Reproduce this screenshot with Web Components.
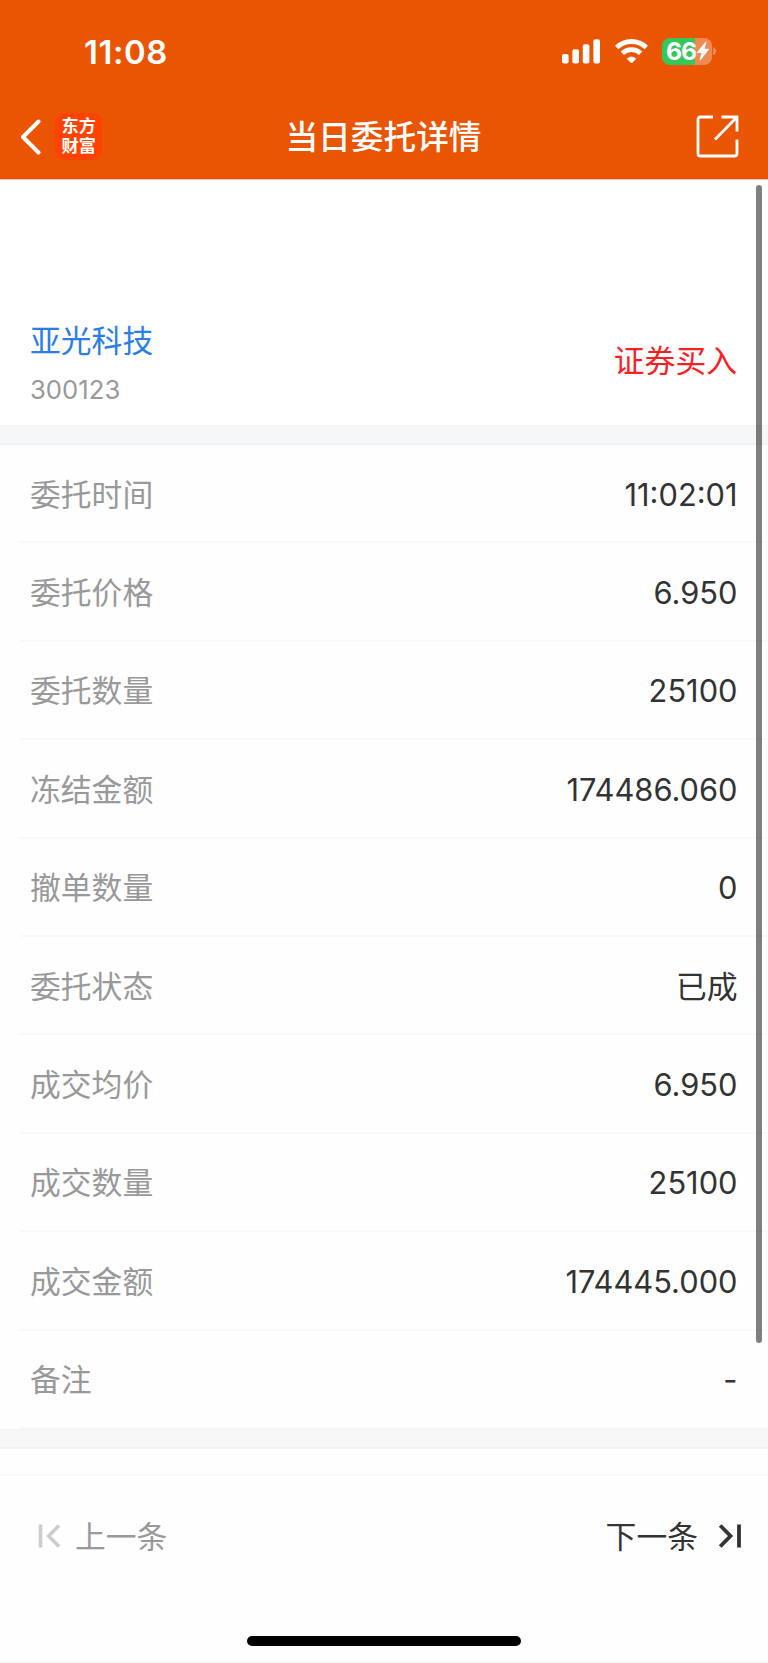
<!DOCTYPE html>
<html lang="zh-CN">
<head>
<meta charset="UTF-8">
<meta name="viewport" content="width=device-width, initial-scale=1">
<title>当日委托详情</title>
<style>
    :root {
        --brand: #ea5504;
        --text: #333;
        --muted: #999;
        --line: #f8f8f9;
        --gap: #f6f7f9;
    }

    body {
        margin: 0;
        background: #fefefe;
        color: var(--text);
        font-family: Inter, "Noto Sans CJK SC", sans-serif;
        font-size: 30.8px;
    }
</style>
</head>
<body>
<order-page></order-page>

<script>
/** Clock, signal, wifi and battery */
class StatusBar extends HTMLElement {
    constructor() {
        super();
        this.attachShadow({ mode: 'open' });
    }

    connectedCallback() {
        this.shadowRoot.innerHTML = `
            <style>
                :host {
                    display: flex;
                    justify-content: space-between;
                    align-items: center;
                    height: 102px;
                    padding: 0 51px 0 84px;
                    box-sizing: border-box;
                    color: #fff;
                }
                .time {
                    padding-top: 1px;
                    font-size: 32.8px;
                    font-weight: 600;
                    line-height: 40px;
                    letter-spacing: 0.6px;
                }
                .icons {
                    display: flex;
                    align-items: center;
                }
                svg { display: block; }
                .wifi { margin: 0 14px 0 14px; }
                .battery {
                    display: flex;
                    align-items: center;
                    gap: 1px;
                }
                .cell {
                    display: flex;
                    align-items: center;
                    width: 50px;
                    height: 27px;
                    border-radius: 8px;
                    background: linear-gradient(90deg, #34c759 33px, #f18a52 33px);
                }
                .level {
                    width: 30px;
                    margin-left: 4px;
                    font-size: 24.8px;
                    font-weight: 700;
                    line-height: 27px;
                    letter-spacing: -1.2px;
                }
            </style>
            <span class="time">${this.getAttribute('time')}</span>
            <div class="icons">
                <svg width="39" height="27" viewBox="0 0 39 27" fill="#fff">
                    <rect x="0" y="16" width="6.6" height="9.5" rx="2"/>
                    <rect x="10.4" y="11.3" width="6.6" height="14.2" rx="2"/>
                    <rect x="20.8" y="6.3" width="6.6" height="19.2" rx="2"/>
                    <rect x="31.4" y="1.2" width="6.6" height="24.3" rx="2"/>
                </svg>
                <svg class="wifi" width="33" height="27" viewBox="0 0 33 27" fill="none" stroke="#fff" stroke-width="4.8">
                    <path d="M1.7 9.5a21.2 21.2 0 0 1 29.6 0"/>
                    <path d="M7.3 15.3a13.2 13.2 0 0 1 18.4 0"/>
                    <path d="M16.5 25l-4.2-4.2a6 6 0 0 1 8.4 0z" fill="#fff" stroke-width="1"/>
                </svg>
                <div class="battery">
                    <div class="cell">
                        <span class="level">${this.getAttribute('battery')}</span>
                        <svg width="14" height="20" viewBox="0 0 14 20" fill="#fff">
                            <path d="M9.7.7 1 11.2q-.5.9.5.9h4L3.7 18.6q0 1 .9.4L13 8.6q.5-.9-.5-.9h-4L10.5 1.1q0-.8-.8-.4z"/>
                        </svg>
                    </div>
                    <svg width="4" height="10" viewBox="0 0 4 10" fill="#f18a52">
                        <path d="M0 1q3 1 3 4t-3 4z"/>
                    </svg>
                </div>
            </div>
        `;
    }
}

/** Title bar with back arrow, brand badge and share button */
class NavBar extends HTMLElement {
    constructor() {
        super();
        this.attachShadow({ mode: 'open' });
    }

    connectedCallback() {
        this.shadowRoot.innerHTML = `
            <style>
                :host {
                    display: grid;
                    grid-template-columns: 1fr auto 1fr;
                    align-items: center;
                    height: 77px;
                    padding: 0 29px 8px 20px;
                    box-sizing: border-box;
                    color: #fff;
                }
                svg { display: block; }
                .left {
                    display: flex;
                    align-items: center;
                    gap: 13px;
                }
                .logo {
                    width: 46.5px;
                    height: 46.5px;
                    padding: 3px 0 0 1px;
                    box-sizing: border-box;
                    border-radius: 9px;
                    background: #ff4200;
                    font: 700 17.2px/20px "Liberation Sans", "Noto Sans CJK SC", sans-serif;
                    text-align: center;
                }
                .logo div { height: 20px; }
                .title {
                    font-size: 32.7px;
                    font-weight: 500;
                    line-height: 44px;
                    margin-left: 8px;
                    padding-top: 1px;
                }
                .share { justify-self: end; }
            </style>
            <div class="left">
                <svg width="22" height="36" viewBox="0 0 22 36" fill="none" stroke="#fff" stroke-width="4" stroke-linecap="round" stroke-linejoin="round">
                    <path d="M18.5 2.5 3 18l15.5 15.5"/>
                </svg>
                <div class="logo"><div>东方</div><div>财富</div></div>
            </div>
            <span class="title"><slot></slot></span>
            <svg class="share" width="43" height="43" viewBox="0 0 43 43" fill="none" stroke="#fff" stroke-width="2.8">
                <path d="M17 2H4.5Q2 2 2 4.5V38.5Q2 41 4.5 41H38.5Q41 41 41 38.5V24.5"/>
                <path d="M25.5 2H41V16.5M40.5 2.5 19 24.5"/>
            </svg>
        `;
    }
}

/** Security name and code on the left, trade side on the right */
class StockHeader extends HTMLElement {
    constructor() {
        super();
        this.attachShadow({ mode: 'open' });
    }

    connectedCallback() {
        this.shadowRoot.innerHTML = `
            <style>
                :host {
                    display: flex;
                    justify-content: space-between;
                    align-items: center;
                    height: 245px;
                    padding: 121px 31px 0 30px;
                    box-sizing: border-box;
                    background: #fff;
                }
                .name {
                    color: #2b7de9;
                    line-height: 44px;
                }
                .code {
                    margin-top: 9px;
                    color: var(--muted);
                    font-size: 25.7px;
                    line-height: 36px;
                }
                .side {
                    color: #f9201f;
                    line-height: 44px;
                    margin-bottom: 5px;
                }
            </style>
            <div>
                <div class="name">${this.getAttribute('name')}</div>
                <div class="code">${this.getAttribute('code')}</div>
            </div>
            <div class="side"><slot></slot></div>
        `;
    }
}

/** One label / value line */
class DetailRow extends HTMLElement {
    constructor() {
        super();
        this.attachShadow({ mode: 'open' });
    }

    connectedCallback() {
        this.shadowRoot.innerHTML = `
            <style>
                :host {
                    display: flex;
                    justify-content: space-between;
                    align-items: center;
                    height: 98.4px;
                    margin-left: 20px;
                    padding: 3px 30.5px 0 10px;
                    box-sizing: border-box;
                    border-bottom: 2px solid var(--line);
                    line-height: 44px;
                }
                .label { color: var(--muted); }
            </style>
            <span class="label">${this.getAttribute('label')}</span>
            <span class="value"><slot></slot></span>
        `;
    }
}

/** Grey strip between sections */
class SectionGap extends HTMLElement {
    constructor() {
        super();
        this.attachShadow({ mode: 'open' });
        this.shadowRoot.innerHTML = `
            <style>
                :host {
                    display: block;
                    height: 20px;
                    box-sizing: border-box;
                    background: var(--gap);
                    border-top: 1px solid #f1f2f4;
                    border-bottom: 2px solid #f1f2f4;
                }
            </style>
        `;
    }
}

/** Previous / next order links */
class OrderPager extends HTMLElement {
    constructor() {
        super();
        this.attachShadow({ mode: 'open' });
        this.shadowRoot.innerHTML = `
            <style>
                :host {
                    display: flex;
                    justify-content: space-between;
                    align-items: center;
                    height: 124px;
                    padding: 0 26px 0 37px;
                    box-sizing: border-box;
                    border-top: 2px solid #f9f9fa;
                    line-height: 44px;
                }
                .link {
                    display: flex;
                    align-items: center;
                }
                .prev { color: var(--muted); gap: 14px; }
                .next { gap: 20px; }
                svg {
                    display: block;
                    margin-bottom: 2px;
                }
            </style>
            <div class="link prev">
                <svg width="24" height="24" viewBox="0 0 24 24" fill="none" stroke="#ccc" stroke-width="3.6">
                    <path d="M3.5.5v23M22 1.5 11.7 12 22 22.5"/>
                </svg>
                <span>上一条</span>
            </div>
            <div class="link next">
                <span>下一条</span>
                <svg width="24" height="24" viewBox="0 0 24 24" fill="none" stroke="#333" stroke-width="3.8">
                    <path d="M21 .5v23M2.2 1.5 12.5 12 2.2 22.5"/>
                </svg>
            </div>
        `;
    }
}

class OrderPage extends HTMLElement {
    constructor() {
        super();
        this.attachShadow({ mode: 'open' });
        this._rows = [
            ['委托时间', '11:02:01'],
            ['委托价格', '6.950'],
            ['委托数量', '25100'],
            ['冻结金额', '174486.060'],
            ['撤单数量', '0'],
            ['委托状态', '已成'],
            ['成交均价', '6.950'],
            ['成交数量', '25100'],
            ['成交金额', '174445.000'],
            ['备注', '-'],
        ];
    }

    connectedCallback() {
        const rows = this._rows
            .map(([label, value]) => `<detail-row label="${label}">${value}</detail-row>`)
            .join('');

        this.shadowRoot.innerHTML = `
            <style>
                :host {
                    display: flex;
                    flex-direction: column;
                    position: relative;
                    width: 768px;
                    height: 1663px;
                    overflow: hidden;
                }
                header {
                    background: var(--brand);
                    border-bottom: 1px solid #f6c2a3;
                }
                .spacer { height: 25px; }
                .home {
                    width: 274px;
                    height: 10px;
                    margin: 38px auto 15px;
                    border-radius: 5px;
                    background: #000;
                }
                .edge {
                    height: 2px;
                    background: #f8f8f9;
                }
                /* scroll indicator floats over the list */
                .thumb {
                    position: absolute;
                    top: 185px;
                    right: 6px;
                    width: 6px;
                    height: 1158px;
                    border-radius: 3px;
                    background: rgba(0, 0, 0, 0.5);
                }
            </style>
            <header>
                <status-bar time="11:08" battery="66"></status-bar>
                <nav-bar>当日委托详情</nav-bar>
            </header>
            <stock-header name="亚光科技" code="300123">证券买入</stock-header>
            <section-gap></section-gap>
            <main>${rows}</main>
            <section-gap></section-gap>
            <div class="spacer"></div>
            <order-pager></order-pager>
            <div class="home"></div>
            <div class="edge"></div>
            <div class="thumb"></div>
        `;
    }
}

customElements.define('status-bar', StatusBar);
customElements.define('nav-bar', NavBar);
customElements.define('stock-header', StockHeader);
customElements.define('detail-row', DetailRow);
customElements.define('section-gap', SectionGap);
customElements.define('order-pager', OrderPager);
customElements.define('order-page', OrderPage);
</script>
</body>
</html>
